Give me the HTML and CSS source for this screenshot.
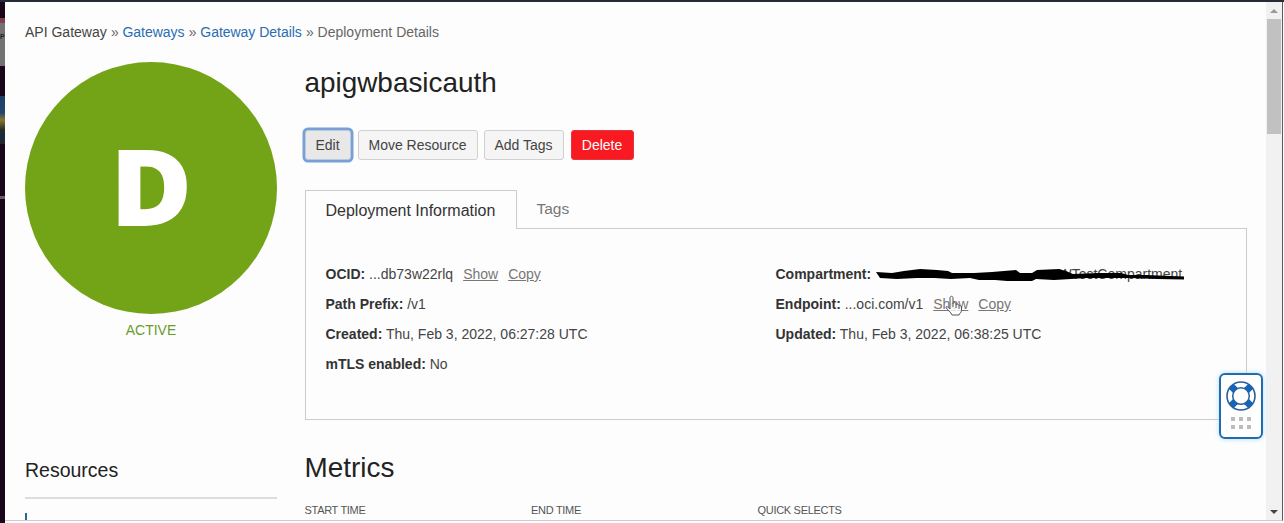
FILE: index.html
```html
<!DOCTYPE html>
<html lang="en">
<head>
<meta charset="utf-8">
<title>Deployment Details</title>
<link rel="stylesheet" href="styles.css">
</head>
<body>
<div class="desktop"><div class="thumb-light">P</div><div class="thumb-photo"></div><div class="thumb-line"></div></div>
<main class="page">
  <nav class="crumbs"><span class="root">API Gateway</span><i>»</i><a>Gateways</a><i>»</i><a>Gateway Details</a><i>»</i><span>Deployment Details</span></nav>
  <div class="columns">
    <aside class="side">
      <div class="badge"><span class="letter">D</span></div>
      <div class="status">ACTIVE</div>
      <h3 class="resources">Resources</h3>
      <div class="marker"></div>
    </aside>
    <section class="content">
      <h1>apigwbasicauth</h1>
      <div class="actions">
        <button class="btn focused">Edit</button><button class="btn move">Move Resource</button><button class="btn add">Add Tags</button><button class="btn danger">Delete</button>
      </div>
      <div class="tabs"><div class="tab active">Deployment Information</div><div class="tab other">Tags</div></div>
      <div class="panel">
        <div class="info">
          <div class="row"><b>OCID:</b> ...db73w22rlq<a>Show</a><a>Copy</a></div>
          <div class="row"><b>Path Prefix:</b> /v1</div>
          <div class="row"><b>Created:</b> Thu, Feb 3, 2022, 06:27:28 UTC</div>
          <div class="row"><b>mTLS enabled:</b> No</div>
        </div>
        <div class="info">
          <div class="row redacted"><b>Compartment:</b><span class="hidden-name">WTestCompartment</span>
            <svg class="scribble" width="314" height="18" viewBox="0 0 314 18"><path d="M2 6L18 7L30 5L46 3L63 4L74 5L78 7L100 7L118 6L130 5L142 4L146 7L158 7L163 4L185 3L192 5L199 8L224 7L247 7L254 9L272 9L310 10.500V13.500L283 13L257 12L232 12L212 12L197 13L180 14L162 13L158 15L133 15L121 14L105 14L96 12L77 13L60 12L43 12L23 13L6 12Z"/></svg>
          </div>
          <div class="row"><b>Endpoint:</b> ...oci.com/v1<a class="hovered">Show<svg class="pointer" width="19" height="24" viewBox="0 0 19 24"><path d="M6 14V3C6 .7 9 .7 9 3V9C9 7 12 7.400 12 9V10C12 8.500 15 9 15 10.500V11C15 10 17.500 10.500 17.500 12V15C17.500 18 15.500 18 15 20H8C7 17 3 15 2 12.500C1.500 11 4 11.500 6 14Z"/><path d="M9 9V12M12 10V13M15 11V14"/></svg></a><a>Copy</a></div>
          <div class="row"><b>Updated:</b> Thu, Feb 3, 2022, 06:38:25 UTC</div>
        </div>
      </div>
      <h2>Metrics</h2>
      <div class="filters"><span>START TIME</span><span>END TIME</span><span>QUICK SELECTS</span></div>
    </section>
  </div>
</main>
<div class="scrollbar"><div class="arrow up"></div><div class="handle"></div><div class="arrow down"></div></div>
<div class="help">
  <svg width="32" height="32" viewBox="0 0 32 32"><circle cx="16" cy="16" r="14" fill="#fff"/><path d="M4.700 8.500L8.500 4.700L14 10L10 14ZM23.500 4.700L27.300 8.500L22 14L18 10ZM4.700 23.500L8.500 27.300L14 22L10 18ZM23.500 27.300L27.300 23.500L22 18L18 22Z" fill="#1266c2" stroke="#1266c2" stroke-width="1.500"/><circle cx="16" cy="16" r="14" fill="none" stroke="#2a6096" stroke-width="1.600"/><circle cx="16" cy="16" r="8.300" fill="#fff" stroke="#2a6096" stroke-width="1.500"/></svg>
  <div class="dots"><i></i><i></i><i></i><i></i><i></i><i></i></div>
</div>
</body>
</html>
```
FILE: styles.css
```css
* { box-sizing: border-box; }
body { margin: 0; width: 1284px; height: 523px; overflow: hidden; position: relative; display: flex; background: #fdfdfd; border-top: 2px solid #252c37; font: 14px/20px "Liberation Sans", Arial, sans-serif; color: #444; }
h1, h2, h3 { margin: 0; font-weight: 400; color: #222; }
.desktop { width: 5px; height: 521px; background: #1b051b; padding-top: 16px; overflow: hidden; }
.thumb-light { height: 48px; background: #747174; border-top: 5px solid #7c4150; font: bold 7px/28px "Liberation Sans", sans-serif; color: #222; }
.thumb-photo { height: 48px; margin-top: 30px; background: linear-gradient(#203c68, #254668 35%, #88752f 50%, #292d25 70%, #182844 85%, #242a21); }
.thumb-line { height: 3px; margin-top: 52px; background: #675b67; }
.page { box-sizing: content-box; width: 1241px; height: 498px; padding: 20px 0 0 20px; overflow: hidden; border-bottom: 1px solid #ccc; }
.crumbs { height: 20px; white-space: nowrap; color: #666; }
.crumbs i { font-style: normal; margin: 0 4.3px 0 4.2px; letter-spacing: -.5px; }
.crumbs a { color: #2a6db0; letter-spacing: -.03px; }
.crumbs .root { color: #444; }
.columns { display: flex; gap: 27.5px; }
.side { width: 252px; padding-top: 20px; }
.badge { width: 252px; height: 252px; border-radius: 50%; background: #73a316; display: flex; align-items: center; justify-content: center; }
.letter { font: 800 107px/105px "Open Sans", sans-serif; color: #fff; transform: scaleX(1.05); padding-bottom: 8px; }
.status { text-align: center; color: #699c2b; margin-top: 6px; }
.resources { font-size: 19.5px; line-height: 24px; height: 41px; margin-top: 118px; border-bottom: 2px solid #ddd; }
.marker { width: 2px; height: 9px; margin-top: 14px; background: #226998; }
.content { width: 942px; padding-top: 25px; }
h1, h2 { font-size: 27.9px; line-height: 32px; }
.actions { display: flex; margin-top: 31px; height: 30px; }
.btn { height: 30px; padding: 0; font: 14px/28px "Liberation Sans", sans-serif; color: #444; background: #f5f5f5; border: 1px solid #d0d0d0; border-radius: 3px; }
.focused { width: 46px; background: #e8e8e8; border-color: #b9cbe0; box-shadow: 0 0 0 2.5px #78a0d4; }
.move { width: 120px; margin-left: 7px; }
.add { width: 80px; margin-left: 6px; }
.danger { width: 63px; margin-left: 7px; background: #f91920; border-color: #e4353b; color: #fff; }
.tabs { display: flex; margin-top: 30px; height: 39px; font-size: 16px; line-height: 37px; }
.active { width: 212px; padding-left: 20px; border: 1px solid #ccc; border-bottom: 0; color: #333; line-height: 39px; }
.other { flex: 1; padding-left: 20px; border-bottom: 1px solid #ccc; color: #777; font-size: 15.5px; }
.panel { height: 191px; border: 1px solid #ccc; border-top: 0; padding: 30px 0 0 20px; display: flex; }
.info { width: 450px; }
.row { height: 30px; line-height: 30px; white-space: nowrap; }
.row b { color: #333; }
.row a { color: #777; text-decoration: underline; margin-left: 10px; }
.redacted { position: relative; }
.hidden-name { display: inline-block; width: 311px; text-align: right; }
.scribble { position: absolute; left: 98px; top: 7px; }
.hovered { position: relative; }
.pointer { position: absolute; left: 11px; top: -1px; fill: #fffc; stroke: #555; stroke-width: 1; }
h2 { margin-top: 32px; }
.filters { display: grid; grid-template-columns: 226.5px 226.5px 1fr; margin-top: 16px; font-size: 11px; letter-spacing: -.3px; color: #555; }
.scrollbar { width: 17px; background: #f1f1f1; height: 519px; border-bottom: 1px solid #ccc; border-right: 1px solid #555b60; display: flex; flex-direction: column; align-items: center; }
.arrow { border: 4px solid transparent; border-top: 0; border-bottom: 4px solid #999; margin-top: 7px; }
.handle { width: 14px; height: 115px; background: #c1c1c1; margin-top: 6px; }
.down { border-top: 4px solid #444; border-bottom: 0; margin-top: auto; margin-bottom: 6px; }
.help { position: absolute; left: 1219px; top: 371px; width: 44px; height: 66px; border: 2px solid #216dac; border-radius: 6px; background: #fff; box-shadow: 0 0 5px #aadcff; display: flex; flex-direction: column; align-items: center; padding-top: 5px; }
.dots { display: grid; grid-template-columns: 4px 4px 4px; gap: 4px; margin-top: 5px; }
.dots i { width: 4px; height: 4px; background: #bbb; }
```
